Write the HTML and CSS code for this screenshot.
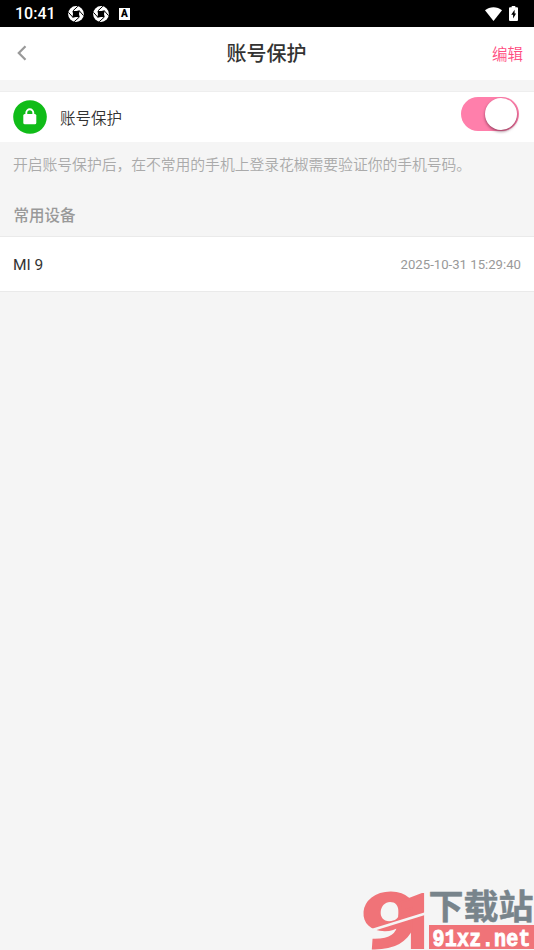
FILE: index.html
```html
<!DOCTYPE html>
<html lang="zh-CN">
<head>
<meta charset="utf-8">
<title>账号保护</title>
<link rel="stylesheet" href="styles.css">
</head>
<body>
<div class="status">
  <span class="clock">10:41</span>
  <svg class="aperture" viewBox="0 0 16 16"><circle cx="8" cy="8" r="7.900" fill="#fff"/><path d="M4.500 5 8.500 5 11.800 4.200 11 8 11.700 11.200 8 11 4.300 11.800 5 8z" fill="#000"/><path d="M5 4.800 9.800.3M11.300 4.800l4.200 4.800M11.200 11.200 6.200 15.700M4.800 11.200.5 6.400" stroke="#000" stroke-width="1"/></svg>
  <svg class="aperture" viewBox="0 0 16 16"><circle cx="8" cy="8" r="7.900" fill="#fff"/><path d="M4.500 5 8.500 5 11.800 4.200 11 8 11.700 11.200 8 11 4.300 11.800 5 8z" fill="#000"/><path d="M5 4.800 9.800.3M11.300 4.800l4.200 4.800M11.200 11.200 6.200 15.700M4.800 11.200.5 6.400" stroke="#000" stroke-width="1"/></svg>
  <span class="input-mode">A</span>
  <svg class="wifi" viewBox="0 0 17 14"><path d="M0 3.300C4.800-.7 12.200-.7 17 3.300L8.500 14z" fill="#fff"/></svg>
  <svg class="battery" viewBox="0 0 9 15"><path d="M2.700 0h3.600v1.300H8q1 0 1 1V14q0 1-1 1H1q-1 0-1-1V2.300q0-1 1-1h1.700z" fill="#fff"/><path d="M5.600 3.800 2.200 8.800h1.900v3.700l3-5H5.600z" fill="#000"/></svg>
</div>
<header class="header">
  <svg class="back" viewBox="0 0 10 16"><path d="M8.500 1.300 1.800 8l6.700 6.700" fill="none" stroke="#999" stroke-width="2.200"/></svg>
  <h1 class="title">账号保护</h1>
  <span class="edit">编辑</span>
</header>
<main>
  <section class="protect">
    <svg class="lock" viewBox="0 0 34 34"><circle cx="17" cy="17" r="16.800" fill="#10bc18"/><rect x="10.300" y="14" width="13" height="10.300" rx="1.500" fill="#fff"/><path d="M13.300 15v-2.200a3.500 3.500 0 0 1 7 0V15" fill="none" stroke="#fff" stroke-width="1.900"/></svg>
    <span class="protect-label">账号保护</span>
    <span class="switch"><span class="knob"></span></span>
  </section>
  <p class="hint">开启账号保护后，在不常用的手机上登录花椒需要验证你的手机号码。</p>
  <h2 class="group">常用设备</h2>
  <section class="device"><span class="name">MI 9</span><span class="time">2025-10-31 15:29:40</span></section>
</main>
<svg class="watermark" viewBox="0 0 180 70">
  <g class="numerals">
    <text class="nine" transform="translate(4 68) skewX(-4)" textLength="59" lengthAdjust="spacingAndGlyphs">9</text>
    <text class="one" transform="translate(41 68)" textLength="40" lengthAdjust="spacingAndGlyphs">1</text>
  </g>
  <path d="M15 51 73 33" stroke="#f5f5f5" stroke-width="2.500"/>
  <text class="site" x="74.500" y="39" textLength="105" lengthAdjust="spacingAndGlyphs">下载站</text>
  <rect x="75" y="45" width="105" height="24" fill="#f07378"/>
  <text class="domain" transform="translate(78.500 65.500) scale(1 1.200)" textLength="98">91xz.net</text>
</svg>
</body>
</html>
```
FILE: styles.css
```css
* { box-sizing: border-box; }
body {
  margin: 0;
  height: 950px;
  overflow: hidden;
  background: #f5f5f5;
  color: #333;
  font-family: Roboto, "Noto Sans CJK SC", sans-serif;
}
svg { display: block; flex: none; }
.status {
  display: flex;
  align-items: center;
  height: 27px;
  padding: 0 15px;
  background: #000;
  color: #fff;
}
.clock { width: 53px; font-size: 16px; font-weight: 500; }
.aperture { width: 16px; height: 16px; margin-right: 8.500px; }
.input-mode {
  width: 11px;
  height: 12px;
  margin-left: 2px;
  background: #fff;
  color: #000;
  font-size: 10px;
  font-weight: 900;
  line-height: 12px;
  text-align: center;
}
.wifi { width: 17px; height: 14px; margin-left: auto; }
.battery { width: 9px; height: 15px; margin: -1px 1px 0 7px; }
.header {
  display: grid;
  grid-template-columns: 1fr auto 1fr;
  align-items: center;
  height: 53px;
  padding: 0 11px 0 17px;
  background: #fff;
}
.back { width: 10px; height: 16px; margin-top: -2px; }
.title { margin: 0 0 0 -7px; font-size: 20px; font-weight: 500; line-height: 28px; }
.edit { justify-self: end; color: #ff4d82; font-size: 15.500px; font-weight: 350; margin-top: -1px; }
.protect {
  display: flex;
  align-items: center;
  height: 51px;
  margin-top: 11px;
  padding: 0 15px 0 13px;
  border-top: 1px solid #eee;
  background: #fff;
}
.lock { width: 34px; height: 34px; margin-top: -1px; }
.protect-label { margin-left: 13px; font-size: 15.500px; font-weight: 350; }
.switch {
  display: flex;
  justify-content: flex-end;
  width: 58px;
  height: 34px;
  margin: -6px 0 0 auto;
  padding: 1px 2px 1px 1px;
  border-radius: 17px;
  background: #ff7fab;
}
.knob { width: 32px; height: 32px; border-radius: 50%; background: #fff; box-shadow: 0 1.500px 3px rgba(80, 20, 45, .6); }
.hint { margin: 11px 0 0 13px; color: #aaa; font-size: 14.830px; font-weight: 350; line-height: 24px; white-space: nowrap; letter-spacing: -.05px; }
.group { margin: 27px 0 0 13.500px; color: #999; font-size: 15.500px; font-weight: 500; line-height: 24px; }
.device {
  display: flex;
  align-items: center;
  justify-content: space-between;
  height: 56px;
  margin-top: 8px;
  padding: 1px 13px 0;
  border: solid #eaeaea;
  border-width: 1px 0;
  background: #fff;
}
.name { font-size: 15.500px; }
.time { color: #999; font-size: 13.170px; }
.watermark { position: absolute; right: 0; bottom: 0; width: 180px; height: 70px; }
.numerals { fill: #f07378; stroke: #f07378; }
.nine { stroke-width: 2px; font: 700 77px Roboto, sans-serif; }
.one { stroke-width: 2px; font: 900 76px Roboto, sans-serif; }
.site { fill: #78848b; stroke: #78848b; stroke-width: .5px; font: 700 34px "Noto Sans CJK SC", sans-serif; }
.domain { fill: #fff; stroke: #fff; stroke-width: .8px; font: 700 20px "Liberation Mono", monospace; }
```
